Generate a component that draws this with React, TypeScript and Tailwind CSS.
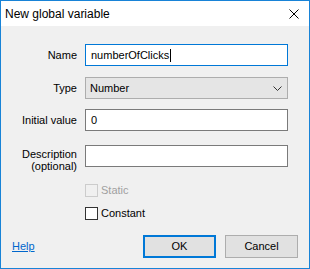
const font = { fontFamily: '"Liberation Sans", Arial, sans-serif' };

function Checkbox({ label, disabled }: { label: string; disabled?: boolean }) {
  return (
    <div className="flex items-center h-[13px]">
      <span
        className={`w-[13px] h-[13px] border ${
          disabled ? "border-[#cccccc] bg-transparent" : "border-[#333333] bg-white"
        }`}
      />
      <span className={`ml-[3px] text-[11px] ${disabled ? "text-[#a0a0a0]" : "text-black"}`}>
        {label}
      </span>
    </div>
  );
}

export default function App() {
  return (
    <div
      className="w-[310px] h-[269px] border border-[#1883d7] bg-[#f0f0f0] flex flex-col text-black"
      style={font}
    >
      <div className="h-[25px] bg-white flex items-center justify-between pl-[4px] pr-[10px]">
        <span className="text-[12px] leading-none">New global variable</span>
        <svg width="10" height="10" viewBox="0 0 10 10" className="shrink-0">
          <path d="M0.5 0.5 L9.5 9.5 M9.5 0.5 L0.5 9.5" stroke="#000" strokeWidth="1" />
        </svg>
      </div>

      <div className="flex-1 flex flex-col">
        <div className="mt-[18px] grid grid-cols-[76px_203px] gap-x-[8px] text-[11px]">
          <div className="h-[22px] flex items-center justify-end">Name</div>
          <div className="h-[22px] border border-[#0078d7] bg-white flex items-center pl-[5px]">
            <span>numberOfClicks</span>
            <span className="w-px h-[13px] bg-black ml-px" />
          </div>

          <div className="mt-[11px] h-[22px] flex items-center justify-end">Type</div>
          <div className="mt-[11px] h-[22px] border border-[#adadad] bg-[#e5e5e5] flex items-center justify-between pl-[4px] pr-[5px]">
            <span>Number</span>
            <svg width="9" height="5" viewBox="0 0 9 5">
              <path d="M0.5 0.5 L4.5 4.5 L8.5 0.5" stroke="#333" strokeWidth="1" fill="none" />
            </svg>
          </div>

          <div className="mt-[10px] h-[22px] flex items-center justify-end">Initial value</div>
          <div className="mt-[10px] h-[22px] border border-[#7a7a7a] bg-white flex items-center pl-[5px]">
            0
          </div>

          <div className="mt-[14px] h-[22px] pt-[3px] text-right leading-[12px] whitespace-nowrap">
            Description
            <br />
            (optional)
          </div>
          <div className="mt-[14px] h-[22px] border border-[#7a7a7a] bg-white" />

          <div className="mt-[17px]" />
          <div className="mt-[17px]">
            <Checkbox label="Static" disabled />
          </div>

          <div className="mt-[10px]" />
          <div className="mt-[10px]">
            <Checkbox label="Constant" />
          </div>
        </div>

        <div className="mt-[15px] flex items-center pl-[11px] pr-[11px] text-[11px]">
          <span className="text-[#0066cc] underline">Help</span>
          <div className="ml-auto flex gap-[9px]">
            <div className="w-[73px] h-[23px] border-2 border-[#0078d7] bg-[#e1e1e1] flex items-center justify-center">
              OK
            </div>
            <div className="w-[73px] h-[23px] border border-[#adadad] bg-[#e1e1e1] flex items-center justify-center">
              Cancel
            </div>
          </div>
        </div>
      </div>
    </div>
  );
}
